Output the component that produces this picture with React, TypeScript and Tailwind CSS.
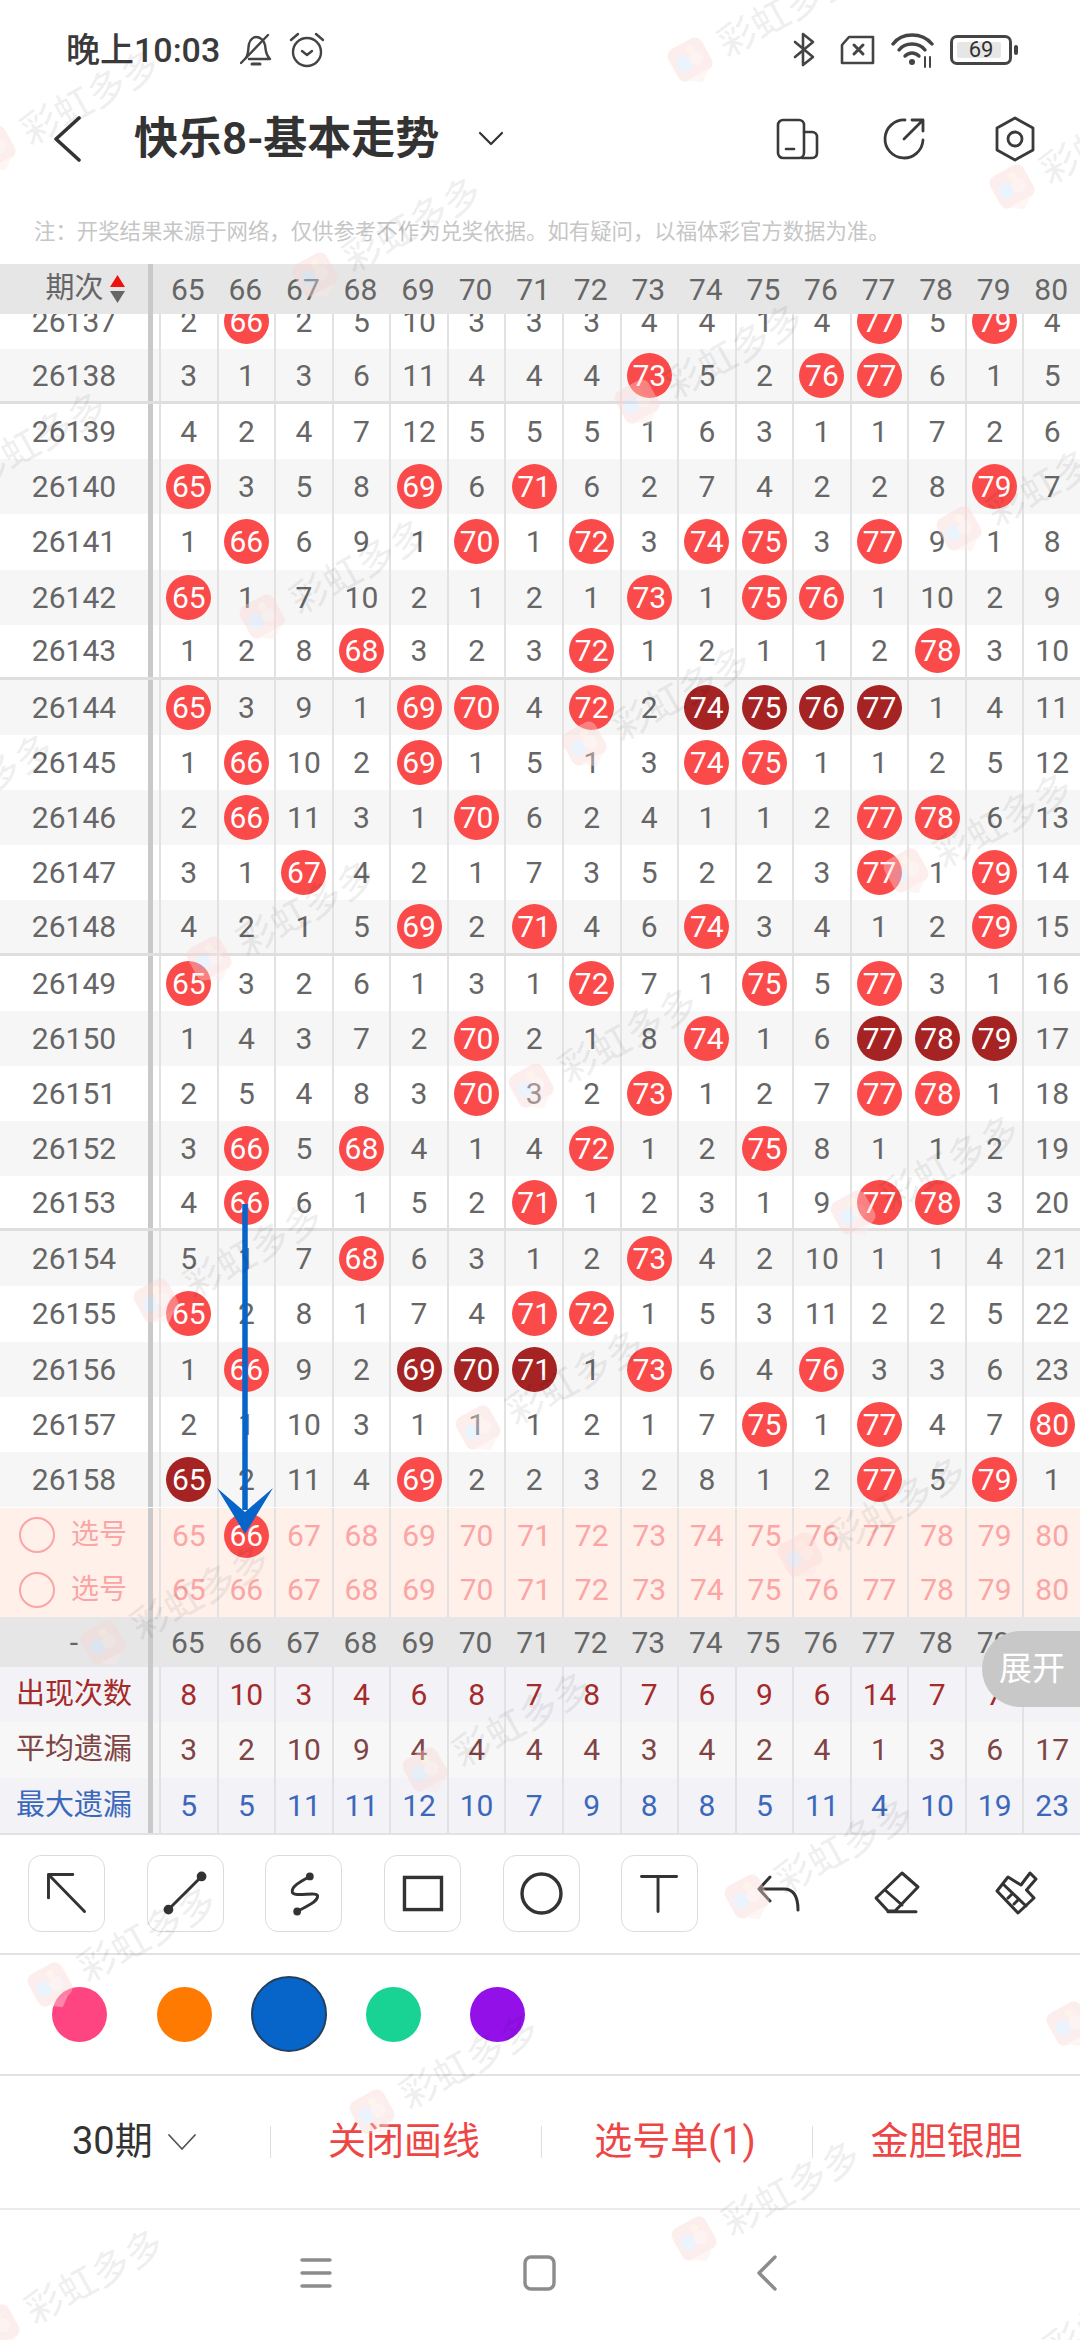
import React from 'react';

const columns = [65, 66, 67, 68, 69, 70, 71, 72, 73, 74, 75, 76, 77, 78, 79, 80];

const rows: [number, string][] = [
  [26137, '2 66 2 5 10 3 3 3 4 4 1 4 77 5 79 4'],
  [26138, '3 1 3 6 11 4 4 4 73 5 2 76 77 6 1 5'],
  [26139, '4 2 4 7 12 5 5 5 1 6 3 1 1 7 2 6'],
  [26140, '65 3 5 8 69 6 71 6 2 7 4 2 2 8 79 7'],
  [26141, '1 66 6 9 1 70 1 72 3 74 75 3 77 9 1 8'],
  [26142, '65 1 7 10 2 1 2 1 73 1 75 76 1 10 2 9'],
  [26143, '1 2 8 68 3 2 3 72 1 2 1 1 2 78 3 10'],
  [26144, '65 3 9 1 69 70 4 72 2 *74 *75 *76 *77 1 4 11'],
  [26145, '1 66 10 2 69 1 5 1 3 74 75 1 1 2 5 12'],
  [26146, '2 66 11 3 1 70 6 2 4 1 1 2 77 78 6 13'],
  [26147, '3 1 67 4 2 1 7 3 5 2 2 3 77 1 79 14'],
  [26148, '4 2 1 5 69 2 71 4 6 74 3 4 1 2 79 15'],
  [26149, '65 3 2 6 1 3 1 72 7 1 75 5 77 3 1 16'],
  [26150, '1 4 3 7 2 70 2 1 8 74 1 6 *77 *78 *79 17'],
  [26151, '2 5 4 8 3 70 3 2 73 1 2 7 77 78 1 18'],
  [26152, '3 66 5 68 4 1 4 72 1 2 75 8 1 1 2 19'],
  [26153, '4 66 6 1 5 2 71 1 2 3 1 9 77 78 3 20'],
  [26154, '5 1 7 68 6 3 1 2 73 4 2 10 1 1 4 21'],
  [26155, '65 2 8 1 7 4 71 72 1 5 3 11 2 2 5 22'],
  [26156, '1 66 9 2 *69 *70 *71 1 73 6 4 76 3 3 6 23'],
  [26157, '2 1 10 3 1 1 1 2 1 7 75 1 77 4 7 80'],
  [26158, '*65 2 11 4 69 2 2 3 2 8 1 2 77 5 79 1'],
];

const stats = [
  { label: '出现次数', color: 'text-[#a52a2a]', bg: 'bg-[#f2f2f7]', values: '8 10 3 4 6 8 7 8 7 6 9 6 14 7 7 1' },
  { label: '平均遗漏', color: 'text-[#7f4545]', bg: 'bg-[#f7f7f7]', values: '3 2 10 9 4 4 4 4 3 4 2 4 1 3 6 17' },
  { label: '最大遗漏', color: 'text-[#3b68bb]', bg: 'bg-[#f2f2f7]', values: '5 5 11 11 12 10 7 9 8 8 5 11 4 10 19 23' },
];

const Ball = ({ value, dark }: { value: string; dark?: boolean }) => (
  <div className={`w-[45px] h-[45px] rounded-full flex items-center justify-center text-white ${dark ? 'bg-[#a52323]' : 'bg-[#fa4a4a]'}`}>
    {value}
  </div>
);

// left column + thick divider + small gap, shared by every table row
const Row = ({ left, className, lines = true, children }: { left: React.ReactNode; className: string; lines?: boolean; children: React.ReactNode }) => (
  <div className={`flex w-full box-border ${className}`}>
    <div className="w-[148px] shrink-0 flex items-center justify-center">{left}</div>
    <div className="w-[4.5px] shrink-0 bg-[#c9c9c9]" />
    <div className="w-[6.5px] shrink-0" />
    <div className="flex flex-1">
      {React.Children.map(children, (c) => (
        <div className={`flex-1 basis-0 flex items-center justify-center ${lines ? 'border-l-2 border-[#e2e2e2]' : ''}`}>{c}</div>
      ))}
    </div>
  </div>
);

const PickRow = ({ ball }: { ball?: number }) => (
  <Row
    className="h-[54.5px] bg-[#fff0ea] text-[#fba5a5]"
    left={
      <div className="flex items-center w-full pl-[19px] gap-[16px]">
        <div className="w-[36px] h-[36px] rounded-full border-2 border-[#fba5a5]" />
        <span className="text-[28px]">选号</span>
      </div>
    }
  >
    {columns.map((c) => (c === ball ? <Ball key={c} value={String(c)} /> : <span key={c}>{c}</span>))}
  </Row>
);

const Watermarks = () => {
  const marks: { x: number; y: number }[] = [];
  for (let i = -6; i < 12; i++) {
    for (let j = -4; j < 14; j++) {
      const x = 692 + i * 322 + j * -375;
      const y = 63 + i * 127 + j * 215;
      if (x > -200 && x < 1120 && y > -40 && y < 2400) marks.push({ x, y });
    }
  }
  return (
    <>
      {marks.map((m) => (
        <div
          key={`${m.x}-${m.y}`}
          className="absolute pointer-events-none flex items-center gap-[13px] -rotate-[29deg] origin-[20px_50%] -translate-y-1/2 whitespace-nowrap"
          style={{ left: m.x - 20, top: m.y }}
        >
          <svg width="40" height="46" viewBox="0 0 40 46" className="opacity-40">
            <rect x="1" y="1" width="38" height="36" rx="8" fill="#fbd5d5" />
            <path d="M8 36 H32 L20 45 Z" fill="#fde8e8" />
            <circle cx="13" cy="20" r="8" fill="#cfe2fa" />
            <circle cx="26" cy="21" r="7" fill="#fbe3e3" />
            <circle cx="25" cy="10" r="4" fill="#fde6cf" />
          </svg>
          <span className="text-[38px] leading-none font-medium text-[#000]/[0.06]">彩虹多多</span>
        </div>
      ))}
    </>
  );
};

const ToolIcon = ({ children }: { children: React.ReactNode }) => (
  <svg width="77" height="77" viewBox="0 0 77 77" fill="none" stroke="#333" strokeWidth="3" strokeLinecap="round" strokeLinejoin="round">
    {children}
  </svg>
);

const ToolBtn = ({ children }: { children: React.ReactNode }) => (
  <div className="w-[77px] h-[77px] shrink-0 rounded-[13px] border border-[#dcdcdc] box-border flex items-center justify-center">
    <ToolIcon>{children}</ToolIcon>
  </div>
);

export default function App() {
  return (
    <div className="relative w-[1080px] h-[2340px] overflow-hidden bg-white font-['Roboto','Noto_Sans_CJK_SC',sans-serif]">
      {/* status bar */}
      <div className="h-[100px] flex items-center pl-[66px] text-[#3a3a3a]">
        <span className="w-[157px] text-[34px] font-medium whitespace-nowrap">晚上10:03</span>
        <svg width="32" height="34" viewBox="0 0 32 34" fill="none" stroke="#444" strokeWidth="2.4" strokeLinecap="round" strokeLinejoin="round" className="ml-[17px]">
          <path d="M6 25 C9 20 8 14 9 11 C10 6 14 4 16 4 C20 4 24 7 25 12 C26 17 25 21 30 26 H9" />
          <path d="M1 30 L28 2" />
          <path d="M12 31 H20" strokeWidth="3" />
        </svg>
        <svg width="36" height="36" viewBox="0 0 36 36" fill="none" stroke="#444" strokeWidth="2.4" strokeLinecap="round" strokeLinejoin="round" className="ml-[17px]">
          <circle cx="18" cy="20" r="14" />
          <path d="M13 19 L18 23 L23 19" />
          <path d="M2 8 L9 2 M34 8 L27 2" />
        </svg>
        <div className="ml-auto mr-[62px] flex items-center">
          <svg width="22" height="36" viewBox="0 0 22 36" fill="none" stroke="#444" strokeWidth="2.6" strokeLinecap="round" strokeLinejoin="round">
            <path d="M2 10 L20 25 L10 33 V2 L20 10 L2 25" />
          </svg>
          <svg width="37" height="30" viewBox="0 0 37 30" fill="none" stroke="#444" strokeWidth="2.6" strokeLinecap="round" strokeLinejoin="round" className="ml-[24px]">
            <path d="M10 2 H34 V28 H3 V10 Z" />
            <path d="M15 10 L24 19 M24 10 L15 19" strokeWidth="3" />
          </svg>
          <svg width="44" height="36" viewBox="0 0 44 36" fill="none" stroke="#444" strokeWidth="3.4" strokeLinecap="round" className="ml-[15px]">
            <path d="M2 12 C11 0 31 0 41 12" />
            <path d="M8 18 C14 10 28 10 34 18" />
            <path d="M14 24 C18 20 24 20 28 24" />
            <circle cx="21" cy="30" r="3" fill="#444" stroke="none" />
            <path d="M34 25 V35 M39 25 V35" strokeWidth="2" />
          </svg>
          <div className="ml-[15px] relative w-[62px] h-[30px] rounded-[7px] border-[3px] border-[#444] box-border flex items-center justify-center">
            <div className="absolute left-[4px] top-[4px] bottom-[4px] w-[44px] bg-[#e6e6e6] rounded-[2px]" />
            <span className="relative text-[22px] leading-none text-[#333]">69</span>
          </div>
          <div className="ml-[2px] w-[4px] h-[10px] rounded-full bg-[#444]" />
        </div>
      </div>

      {/* title bar */}
      <div className="h-[78px] flex items-center">
        <svg width="30" height="46" viewBox="0 0 30 46" fill="none" stroke="#333" strokeWidth="3.6" strokeLinecap="round" strokeLinejoin="round" className="ml-[52px]">
          <path d="M27 2 L4 23 L27 44" />
        </svg>
        <span className="ml-[52px] text-[44px] leading-none font-semibold text-[#333]">快乐8-基本走势</span>
        <svg width="26" height="16" viewBox="0 0 26 16" fill="none" stroke="#333" strokeWidth="2.2" strokeLinecap="round" strokeLinejoin="round" className="ml-[39px]">
          <path d="M2 2 L13 13 L24 2" />
        </svg>
        <div className="ml-auto flex items-center mr-[44px]">
          <svg width="44" height="42" viewBox="0 0 44 42" fill="none" stroke="#3a3a3a" strokeWidth="2.6" strokeLinecap="round" strokeLinejoin="round">
            <rect x="2" y="2" width="26" height="38" rx="5" />
            <path d="M28 14 H36 C39 14 41 16 41 19 V35 C41 38 39 40 36 40 H26" />
            <path d="M10 31 H18" />
          </svg>
          <svg width="44" height="44" viewBox="0 0 44 44" fill="none" stroke="#3a3a3a" strokeWidth="2.8" strokeLinecap="round" strokeLinejoin="round" className="ml-[62px]">
            <path d="M23 3 A19 19 0 1 0 41 23" />
            <path d="M22 22 L41 3 M30 3 H41 V14" />
          </svg>
          <svg width="42" height="46" viewBox="0 0 42 46" fill="none" stroke="#3a3a3a" strokeWidth="2.8" strokeLinecap="round" strokeLinejoin="round" className="ml-[68px]">
            <path d="M21 2 L39 12 V34 L21 44 L3 34 V12 Z" />
            <circle cx="21" cy="23" r="7" />
          </svg>
        </div>
      </div>

      {/* notice */}
      <div className="h-[86px] pl-[34px] pt-[42px] text-[21.4px] leading-[24px] text-[#c6c6c6] whitespace-nowrap">
        注：开奖结果来源于网络，仅供参考不作为兑奖依据。如有疑问，以福体彩官方数据为准。
      </div>

      {/* table */}
      <div className="text-[30px] text-[#666]">
        <Row
          className="h-[50px] bg-[#e6e6e6]"
          lines={false}
          left={
            <div className="flex items-center pl-[22px] gap-[6px]">
              <span className="text-[29px]">期次</span>
              <svg width="15" height="30" viewBox="0 0 15 30">
                <path d="M7.5 1 L15 13 H0 Z" fill="#f01010" />
                <path d="M0 17 H15 L7.5 29 Z" fill="#666" />
              </svg>
            </div>
          }
        >
          {columns.map((c) => (
            <span key={c}>{c}</span>
          ))}
        </Row>

        <div className="h-[1194px] overflow-hidden">
          <div className="-mt-[20.15px]">
            {rows.map(([issue, values], idx) => (
              <Row
                key={issue}
                left={<span>{issue}</span>}
                className={`h-[55.15px] ${idx % 2 === 1 ? 'bg-[#f6f6f6]' : 'bg-white'} ${(issue - 26138) % 5 === 0 && issue !== 26158 ? 'border-b-[3px] border-[#dedede]' : ''}`}
              >
                {values.split(' ').map((v, i) => {
                  const dark = v.startsWith('*');
                  const n = v.replace('*', '');
                  return Number(n) === columns[i] ? <Ball key={i} value={n} dark={dark} /> : <span key={i}>{n}</span>;
                })}
              </Row>
            ))}
          </div>
        </div>

        <PickRow ball={66} />
        <PickRow />

        <Row className="h-[50px] bg-[#e6e6e6]" lines={false} left={<span>-</span>}>
          {columns.map((c) => (
            <span key={c}>{c}</span>
          ))}
        </Row>

        {stats.map((s) => (
          <Row key={s.label} className={`h-[55.33px] ${s.bg} ${s.color}`} left={<span className="text-[29px]">{s.label}</span>}>
            {s.values.split(' ').map((v, i) => (
              <span key={i}>{v}</span>
            ))}
          </Row>
        ))}
      </div>

      {/* drawing tools */}
      <div className="h-[122px] border-t-2 border-b-2 border-[#e2e2e2] box-border flex items-center pl-[28px] gap-[41.7px]">
        <ToolBtn>
          <path d="M20 43 V19 H45 M20 19 L57 57" />
        </ToolBtn>
        <ToolBtn>
          <path d="M21 55 L55 21" />
          <circle cx="21" cy="55" r="3.5" fill="#333" />
          <circle cx="55" cy="21" r="3.5" fill="#333" />
        </ToolBtn>
        <ToolBtn>
          <path d="M45 21 C36 26 26 31 27 37 C28 43 53 36 53 41 C53 48 40 52 32 57" />
          <circle cx="45" cy="21" r="2.5" fill="#333" />
          <circle cx="32" cy="57" r="2.5" fill="#333" />
        </ToolBtn>
        <ToolBtn>
          <rect x="20" y="22" width="38" height="33" strokeWidth="3.5" strokeLinejoin="miter" />
        </ToolBtn>
        <ToolBtn>
          <circle cx="38.5" cy="38.5" r="20" strokeWidth="3.5" />
        </ToolBtn>
        <ToolBtn>
          <path d="M20 21 H56 M37 21 V57" />
        </ToolBtn>
        <div className="w-[77px] shrink-0">
          <ToolIcon>
            <path d="M30 22 L19 34 L30 46 M19 34 H44 Q58 34 58 55" />
          </ToolIcon>
        </div>
        <div className="w-[77px] shrink-0">
          <ToolIcon>
            <path d="M43 18 L59 32 L36 56 H29 L17 43 Z M26 35 L43 50 M29 56.7 H57" />
          </ToolIcon>
        </div>
        <div className="w-[77px] shrink-0">
          <ToolIcon>
            <path d="M19 36 L30 22 L43 30 L52 18 L58 24 L48.5 35 L56 43 L40 58 Z M25 29 L48 51 M30 43 L34 39 M36 49 L40 45" />
          </ToolIcon>
        </div>
      </div>

      {/* colour picks */}
      <div className="h-[121px] flex items-center border-b-2 border-[#e2e2e2] box-border pl-[52px] gap-[49.5px]">
        <div className="w-[55px] h-[55px] rounded-full bg-[#ff4581]" />
        <div className="w-[55px] h-[55px] rounded-full bg-[#ff7a00]" />
        <div className="w-[76px] h-[76px] -mx-[10.5px] rounded-full bg-[#0765c9] border-2 border-[#25405f]" />
        <div className="w-[55px] h-[55px] rounded-full bg-[#18d393]" />
        <div className="w-[55px] h-[55px] rounded-full bg-[#9311e8]" />
      </div>

      {/* actions */}
      <div className="h-[134px] flex items-center border-b-2 border-[#ebebeb] box-border text-[38px] text-[#ee4545]">
        <div className="w-[270px] shrink-0 flex items-center pl-[72px] text-[#333]">
          <span>30期</span>
          <svg width="30" height="18" viewBox="0 0 30 18" fill="none" stroke="#555" strokeWidth="1.8" strokeLinecap="round" strokeLinejoin="round" className="ml-[14px]">
            <path d="M2 2 L15 16 L28 2" />
          </svg>
        </div>
        <div className="w-[1px] h-[32px] bg-[#dedede] shrink-0" />
        <div className="w-[270px] text-center -translate-x-[2px]">关闭画线</div>
        <div className="w-[1px] h-[32px] bg-[#dedede] shrink-0" />
        <div className="w-[270px] text-center -translate-x-[2px]">选号单(1)</div>
        <div className="w-[1px] h-[32px] bg-[#dedede] shrink-0" />
        <div className="flex-1 text-center">金胆银胆</div>
      </div>

      {/* system nav */}
      <div className="h-[129px] relative flex items-center justify-center pb-[2px]">
        <svg width="480" height="36" viewBox="0 0 480 36" fill="none" stroke="#8c8c8c" strokeWidth="3.4" strokeLinecap="round" strokeLinejoin="round">
          <path d="M2 5 H30 M2 18 H30 M2 31 H30" />
          <rect x="225" y="2" width="29" height="32" rx="6" />
          <path d="M475 2 L459 18 L475 34" />
        </svg>
      </div>

      {/* drawn arrow over the table */}
      <svg className="absolute left-[210px] top-[1200px] pointer-events-none" width="70" height="340" viewBox="0 0 70 340">
        <path d="M35 4 V310" stroke="#0765c9" strokeWidth="5.5" />
        <path d="M7 288 L35 312 L63 288 L35 334 Z" fill="#0765c9" />
      </svg>

      {/* expand tab */}
      <div className="absolute left-[982px] top-[1631px] w-[98px] h-[76px] rounded-l-[38px] bg-[#c8c8c8] flex items-center pl-[17px] text-[33px] text-white whitespace-nowrap">
        展开
      </div>

      <Watermarks />
    </div>
  );
}
